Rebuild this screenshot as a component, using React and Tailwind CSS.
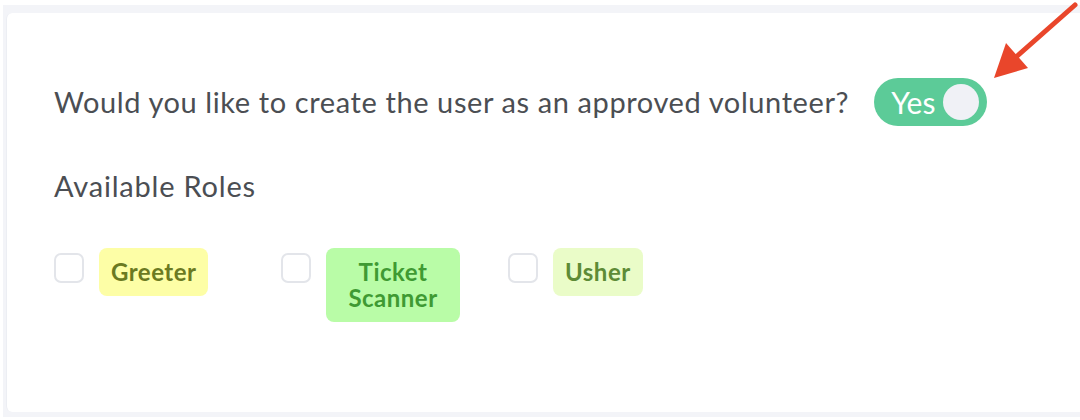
import React, { useState } from 'react';

const roles = [
  { name: 'Greeter', bg: 'bg-[#fdfea6]', text: 'text-[#6b7a22]' },
  { name: 'Ticket Scanner', bg: 'bg-[#b9fca7]', text: 'text-[#3f9a33]' },
  { name: 'Usher', bg: 'bg-[#eafcc8]', text: 'text-[#5d8b36]' },
];

function RoleOption({ role }) {
  const [checked, setChecked] = useState(false);
  return (
    <div className="w-[227px] flex items-start gap-[15px]">
      <button
        onClick={() => setChecked(!checked)}
        className="mt-[5px] w-[30px] h-[30px] shrink-0 rounded-[7px] border-2 border-[#e3e5ea] bg-white"
      />
      <span
        className={`max-w-[134px] rounded-[8px] px-[12px] py-[11px] text-center text-[24px] leading-[26px] tracking-[0.5px] font-bold ${role.bg} ${role.text}`}
      >
        {role.name}
      </span>
    </div>
  );
}

export default function App() {
  const [approved, setApproved] = useState(true);

  return (
    <div
      className="w-[1080px] h-[420px] bg-white pt-[5px] pl-[3px] pb-[3px] overflow-hidden"
      style={{ fontFamily: 'Lato, "Noto Sans", sans-serif' }}
    >
      <div className="relative h-full bg-[#f3f4f8] pt-[8px] pl-[3px] pb-[5px]">
        <div className="h-full bg-white rounded-tl-[6px] rounded-bl-[6px] border-l border-[#eceef3] pl-[47px] pt-[65px]">
          <div className="flex items-center">
            <p className="text-[29px] tracking-[0.6px] text-[#4b4e53]">
              Would you like to create the user as an approved volunteer?
            </p>
            <button
              onClick={() => setApproved(!approved)}
              className="ml-[25px] w-[113px] h-[48px] rounded-full bg-[#5ccb98] flex items-center justify-between pl-[17px] pr-[8px]"
            >
              <span className="text-white text-[30px]">{approved ? 'Yes' : 'No'}</span>
              <span className="w-[36px] h-[36px] rounded-full bg-[#f0f1f6]" />
            </button>
          </div>

          <h3 className="mt-[38px] text-[29px] tracking-[0.8px] text-[#4b4e53]">Available Roles</h3>

          <div className="mt-[40px] flex">
            {roles.map((r) => (
              <RoleOption key={r.name} role={r} />
            ))}
          </div>
        </div>

        <svg
          className="absolute left-[982px] top-[-5px]"
          width="98"
          height="90"
          viewBox="0 0 98 90"
        >
          <line x1="90" y1="5" x2="30" y2="58" stroke="#e9462b" strokeWidth="5" strokeLinecap="round" />
          <polygon points="9,78 21,43 43,68" fill="#e9462b" />
        </svg>
      </div>
    </div>
  );
}
